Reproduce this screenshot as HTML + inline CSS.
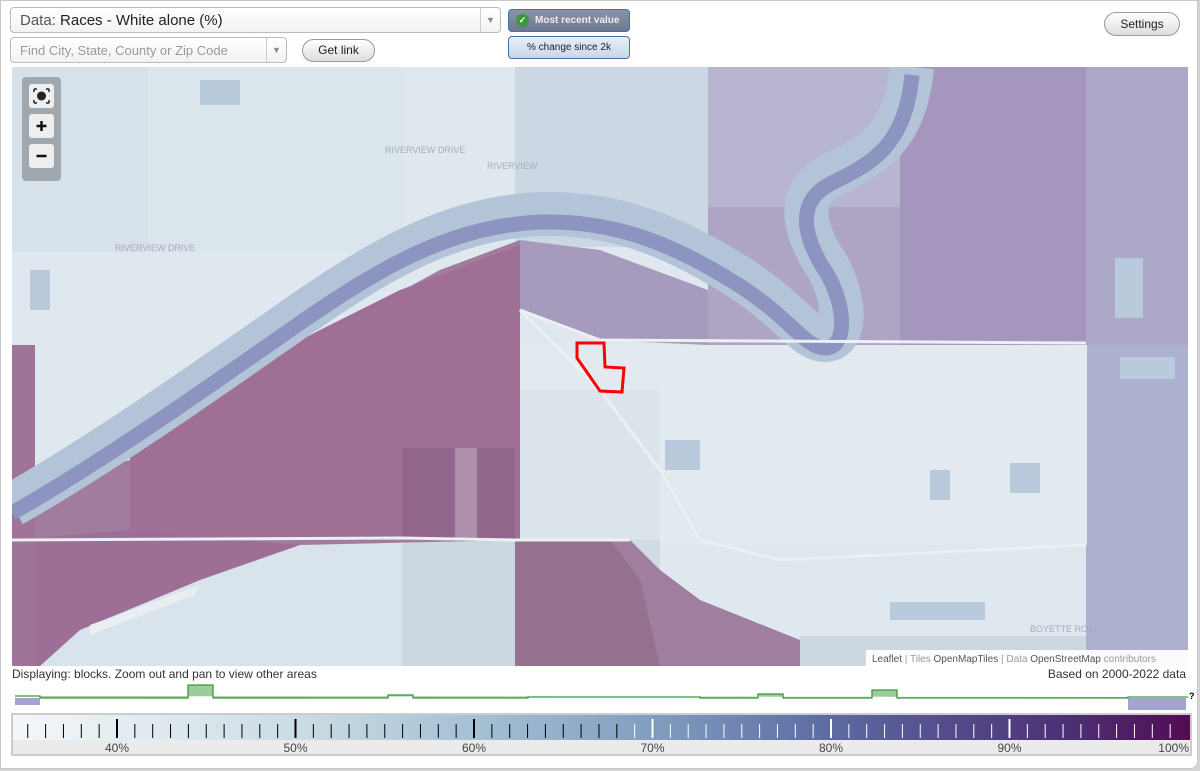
<!DOCTYPE html>
<html><head><meta charset="utf-8"><style>
*{box-sizing:border-box}
body{margin:0;width:1200px;height:771px;background:#d4d4d4;font-family:"Liberation Sans",Arial,sans-serif;overflow:hidden;position:relative}
.frame{position:absolute;left:0;top:0;width:1198px;height:769px;background:#fff;border:1px solid #c8c8c8;border-radius:0 0 8px 0}
.sel{position:absolute;border:1px solid #bbb;border-radius:4px;background:linear-gradient(#fff,#f2f2f2)}
.btn{position:absolute;border:1px solid #999;border-radius:12px;background:linear-gradient(#fff,#ddd);font-size:12px;text-align:center;color:#222}
</style></head><body><div class="frame"></div>
<div class="sel" style="left:10px;top:7px;width:491px;height:26px;font-size:15px;padding:4px 9px;color:#555">Data: <span style="color:#222">Races - White alone (%)</span><span style="position:absolute;right:0;top:0;width:20px;height:24px;border-left:1px solid #ccc;color:#888;font-size:9px;text-align:center;line-height:24px">▼</span></div>
<div class="sel" style="left:10px;top:37px;width:277px;height:26px;font-size:13px;padding:5px 9px;color:#999">Find City, State, County or Zip Code<span style="position:absolute;right:0;top:0;width:20px;height:24px;border-left:1px solid #ccc;color:#888;font-size:9px;text-align:center;line-height:24px">▼</span></div>
<div class="btn" style="left:302px;top:39px;width:73px;height:23px;line-height:21px">Get link</div>
<div style="position:absolute;left:508px;top:9px;width:122px;height:23px;border:1px solid #4a6fa5;border-radius:4px;background:linear-gradient(#8a93a8,#6f7890);color:#eee;font-size:10px;font-weight:bold;line-height:21px;padding-left:26px">Most recent value<span style="position:absolute;left:7px;top:4px;width:13px;height:13px;border-radius:50%;background:#3a9a3a;color:#fff;font-size:9px;line-height:13px;text-align:center">✓</span></div>
<div style="position:absolute;left:508px;top:36px;width:122px;height:23px;border:1px solid #4a6fa5;border-radius:4px;background:linear-gradient(#e6eef8,#c9d8ea);color:#222;font-size:10px;line-height:21px;text-align:center">% change since 2k</div>
<div class="btn" style="left:1104px;top:12px;width:76px;height:24px;line-height:22px">Settings</div>

<svg style="position:absolute;left:12px;top:67px" width="1176" height="599" viewBox="12 67 1176 599">
<rect x="12" y="67" width="1176" height="599" fill="#dfe8ee"/>
<rect x="12" y="67" width="390" height="185" fill="#d6e1ea"/>
<rect x="148" y="67" width="255" height="185" fill="#dbe5ec"/>
<rect x="515" y="67" width="195" height="180" fill="#cbd8e4"/>
<rect x="708" y="67" width="192" height="280" fill="#aea5c5"/>
<rect x="708" y="67" width="192" height="140" fill="#b8b5d0"/>
<rect x="900" y="67" width="186" height="280" fill="#a596bd"/>
<rect x="1086" y="67" width="102" height="278" fill="#aaa7c7"/>
<rect x="1086" y="345" width="102" height="321" fill="#aeb0cf"/>
<rect x="515" y="345" width="572" height="200" fill="#e2eaef"/>
<rect x="515" y="390" width="145" height="150" fill="#dbe4ea"/>
<rect x="12" y="540" width="505" height="126" fill="#d8e3eb"/>
<rect x="402" y="540" width="115" height="126" fill="#ccd8df"/>
<rect x="515" y="540" width="145" height="30" fill="#d0dbe2"/>
<path d="M12 520 L90 470 L130 460 L250 390 L330 330 L440 270 L520 240 L520 540 L300 545 L200 570 L130 595 L60 620 L12 650Z" fill="#a27c9f"/>
<path d="M130 430 L320 330 L400 290 L520 245 L520 540 L130 540Z" fill="#9f6f96"/>
<rect x="402" y="448" width="113" height="92" fill="#92658c"/>
<rect x="455" y="448" width="22" height="92" fill="#ad8fac"/>
<path d="M12 540 L130 530 L300 545 L200 580 L80 630 L40 666 L12 666Z" fill="#9d6e96"/>
<path d="M12 345 L35 345 L35 666 L12 666Z" fill="#a07499"/>
<path d="M520 240 L600 250 L708 290 L708 345 L600 340 L520 310Z" fill="#a79bbd"/>
<path d="M515 540 L630 540 L660 570 L700 600 L800 640 L800 666 L515 666Z" fill="#9f7e9f"/>
<path d="M515 540 L610 540 L640 580 L660 666 L515 666Z" fill="#957190"/>
<rect x="800" y="636" width="286" height="30" fill="#cbd8e2"/>
<g fill="none" stroke-linecap="butt">
<path d="M12 505 C100 455 200 385 300 315 C380 260 450 218 540 214 C620 212 680 240 740 278 C790 310 805 340 825 340 C850 340 845 290 822 258 C800 220 800 192 830 176 C870 156 905 140 912 67" stroke="#b3c4d9" stroke-width="44"/>
<path d="M12 505 C100 455 200 385 300 315 C380 260 450 218 540 214 C620 212 680 240 740 278 C790 310 805 340 825 340 C850 340 845 290 822 258 C800 220 800 192 830 176 C870 156 905 140 912 67" stroke="#8d94bf" stroke-width="15" transform="translate(0,8)"/>
</g>
<path d="M90 625 L200 585 L195 595 L90 635Z" fill="#e8eef2"/>
<path d="M12 540 L400 538 L515 540 L630 540 M520 310 L600 340 L1086 343 M520 310 L600 390 L660 470 L700 540 L780 560 L1086 545" stroke="#eaf0f3" stroke-width="3" fill="none"/>
<path d="M577 343 L604 343 L605 367 L624 368 L622 392 L600 391 L577 358Z" fill="none" stroke="#f00" stroke-width="3"/>
<g fill="#b9cadc">
<rect x="1115" y="258" width="28" height="60"/><rect x="1120" y="357" width="55" height="22"/><rect x="890" y="602" width="95" height="18"/><rect x="1010" y="463" width="30" height="30"/><rect x="665" y="440" width="35" height="30"/><rect x="930" y="470" width="20" height="30"/><rect x="30" y="270" width="20" height="40"/><rect x="200" y="80" width="40" height="25"/>
</g>
<g fill="#fff" fill-opacity=".95"><rect x="866" y="650" width="322" height="16"/></g>
<text x="872" y="662" font-size="10" fill="#999" font-family="Liberation Sans"><tspan fill="#555">Leaflet</tspan> | Tiles <tspan fill="#555">OpenMapTiles</tspan> | Data <tspan fill="#555">OpenStreetMap</tspan> contributors</text>
<g font-size="9" fill="#aab" font-family="Liberation Sans"><text x="385" y="153">RIVERVIEW DRIVE</text><text x="487" y="169">RIVERVIEW</text><text x="115" y="251">RIVERVIEW DRIVE</text><text x="1030" y="632">BOYETTE ROAD</text></g>
<rect x="22" y="77" width="39" height="104" rx="4" fill="#000" fill-opacity=".25"/>
<rect x="29" y="84" width="25" height="24" rx="3" fill="#eee"/><rect x="29" y="114" width="25" height="24" rx="3" fill="#eee"/><rect x="29" y="144" width="25" height="24" rx="3" fill="#eee"/>
<circle cx="41.5" cy="96" r="4.5" fill="#222"/><path d="M34 89h3M34 89v3M49 89h-3M49 89v3M34 103h3M34 103v-3M49 103h-3M49 103v-3" stroke="#222" stroke-width="1.5"/>
<path d="M41.5 121v10M36.5 126h10" stroke="#111" stroke-width="2.5"/><path d="M36.5 156h10" stroke="#111" stroke-width="2.5"/>
</svg>

<div style="position:absolute;left:12px;top:667px;font-size:12px;color:#333">Displaying: blocks. Zoom out and pan to view other areas</div>
<div style="position:absolute;right:14px;top:667px;font-size:12px;color:#333">Based on 2000-2022 data</div>
<svg style="position:absolute;left:0;top:680px" width="1200" height="32">
<rect x="15" y="18" width="25" height="7" fill="#a4a4d2"/><rect x="1128" y="18" width="58" height="12" fill="#a4a4d2"/>
<path d="M15 16 H40 V18 H188 V5 H213 V18 H388 V15 H413 V18 H528 V17 H700 V18 H758 V14 H783 V18 H872 V10 H897 V18 H1128 V17 H1188" fill="#9ccc98" stroke="#3a9a3a" stroke-width="1.3"/>
<text x="1189" y="19" font-size="9" font-weight="bold">?</text>
</svg>
<div style="position:absolute;left:11px;top:713px;width:1181px;height:43px;border:2px solid #ccc;background:#ebebeb">
<div style="position:absolute;left:0;top:0;width:1177px;height:25px;background:linear-gradient(90deg,#f4f7f9 0%,#c9dbe4 25%,#a3bfd3 40%,#7f9cbf 55%,#5f6fa5 68%,#55508f 78%,#4c2f74 90%,#520c52 100%)"></div>
<svg style="position:absolute;left:0;top:0" width="1177" height="40" id="t"></svg>
</div>
<script>
var s='',x0=104;for(var p=35;p<=100;p++){var x=x0+(p-40)*17.85;if(x<4||x>1176)continue;var maj=p%10==0;var c=p<69?'#000':'#fff';if(p<100)s+='<line x1="'+x+'" x2="'+x+'" y1="'+(maj?4:9)+'" y2="23" stroke="'+c+'" stroke-width="'+(maj?2:1)+'"/>';if(maj)s+='<text x="'+(p==100?1176:x)+'" y="37" font-size="12" fill="#444" text-anchor="'+(p==100?'end':'middle')+'" font-family="Liberation Sans">'+p+'%</text>';}
document.getElementById('t').innerHTML=s;
</script>
</body></html>
